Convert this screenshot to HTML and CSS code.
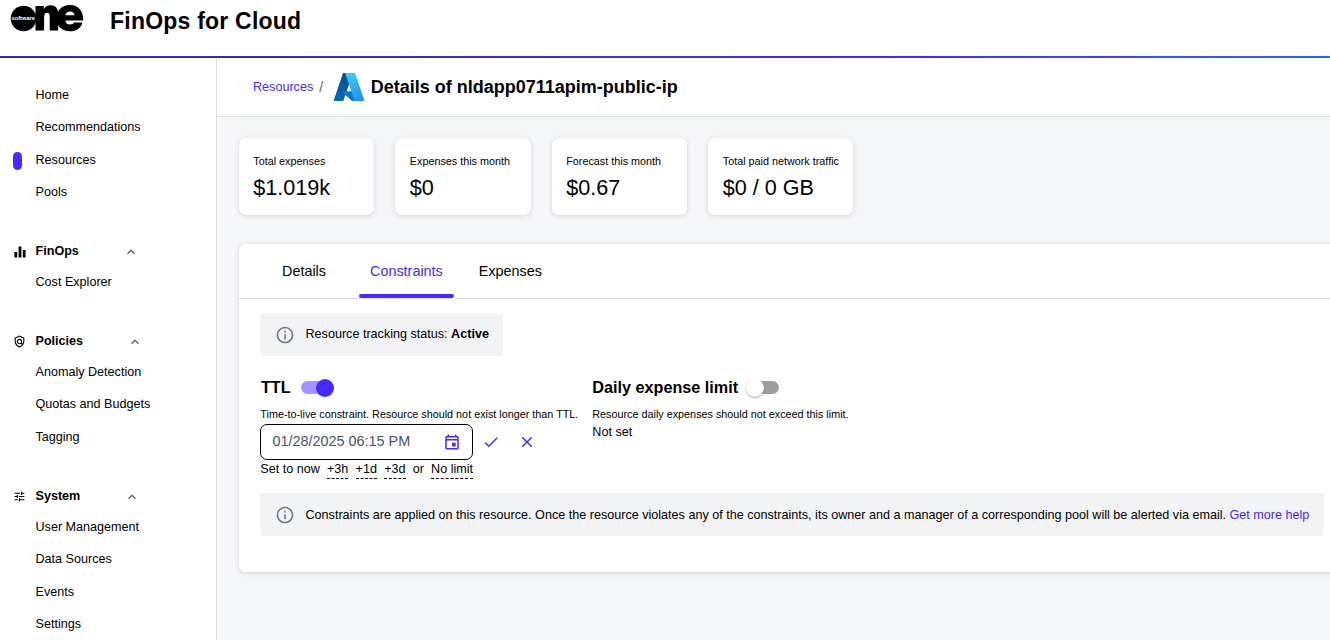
FILE: index.html
```html
<!DOCTYPE html>
<html lang="en">
<head>
<meta charset="utf-8">
<title>FinOps for Cloud</title>
<link rel="stylesheet" href="styles.css">
</head>
<body>
<header class="topbar">
  <svg class="brand" viewBox="0 0 74 28" width="74" height="28">
    <circle cx="13.500" cy="14.500" r="12.800"/>
    <path d="M25.500 2h8.300v3C35.300 2.600 37.300 1.200 40.200 1.200c5.500 0 8 3.300 8 9V26.500h-8.500V12.500c0-2.600-.7-3.700-2.500-3.700-2.100 0-3.100 1.500-3.100 4.200v13.500h-8.600z"/>
    <path fill-rule="evenodd" d="M60 1c8 0 13.300 5.500 13.300 15.500H55.300c.4 2.700 2 4 4.700 4 2.200 0 3.400-.7 4.100-2h8.400C71 24 66.500 27.300 60 27.300c-8 0-13.500-5-13.500-13S52 1 60 1zM55.300 11.300h9.400C64.200 8.800 62.600 7.400 60 7.400s-4.200 1.400-4.700 3.900z"/>
    <text class="brand-word" x="1.500" y="16.200" textLength="23.500" lengthAdjust="spacingAndGlyphs">software</text>
  </svg>
  <h1 class="product">FinOps for Cloud</h1>
</header>
<div class="shell">
  <nav class="sidebar">
    <ul class="nav-list">
      <li>Home</li>
      <li>Recommendations</li>
      <li class="current">Resources</li>
      <li>Pools</li>
    </ul>
    <section class="nav-group">
      <h2 class="nav-title">
        <svg class="nav-icon bars" viewBox="2 2 20 20"><path d="M10 20h4V4h-4v16zm-6 0h4v-8H4v8zM16 9v11h4V9h-4z"/></svg>
        <span class="nav-label finops">FinOps</span>
        <svg class="chevron" viewBox="0 0 24 24"><path d="m12 8-6 6 1.410 1.410L12 10.830l4.590 4.580L18 14z"/></svg>
      </h2>
      <ul class="nav-list"><li>Cost Explorer</li></ul>
    </section>
    <section class="nav-group">
      <h2 class="nav-title">
        <svg class="nav-icon" viewBox="0 0 24 24"><path d="M12 1 3 5v6c0 5.550 3.840 10.740 9 12 5.160-1.260 9-6.450 9-12V5l-9-4zm7 10c0 1.850-.51 3.650-1.380 5.210l-1.450-1.450c1.290-1.940 1.070-4.580-.64-6.290-1.950-1.950-5.120-1.950-7.070 0-1.950 1.950-1.950 5.120 0 7.070 1.710 1.710 4.350 1.920 6.290.64l1.720 1.720c-1.190 1.420-2.730 2.510-4.470 3.040-4.020-1.250-7-5.420-7-9.940V6.300l7-3.110 7 3.110V11zm-7 4c-1.660 0-3-1.340-3-3s1.340-3 3-3 3 1.340 3 3-1.340 3-3 3z"/></svg>
        <span class="nav-label policies">Policies</span>
        <svg class="chevron" viewBox="0 0 24 24"><path d="m12 8-6 6 1.410 1.410L12 10.830l4.590 4.580L18 14z"/></svg>
      </h2>
      <ul class="nav-list">
        <li>Anomaly Detection</li>
        <li>Quotas and Budgets</li>
        <li>Tagging</li>
      </ul>
    </section>
    <section class="nav-group last">
      <h2 class="nav-title">
        <svg class="nav-icon" viewBox="0 0 24 24"><path d="M3 17v2h6v-2H3zM3 5v2h10V5H3zm10 16v-2h8v-2h-8v-2h-2v6h2zM7 9v2H3v2h4v2h2V9H7zm14 4v-2H11v2h10zm-6-4h2V7h4V5h-4V3h-2v6z"/></svg>
        <span class="nav-label system">System</span>
        <svg class="chevron" viewBox="0 0 24 24"><path d="m12 8-6 6 1.410 1.410L12 10.830l4.590 4.580L18 14z"/></svg>
      </h2>
      <ul class="nav-list">
        <li>User Management</li>
        <li>Data Sources</li>
        <li>Events</li>
        <li>Settings</li>
      </ul>
    </section>
  </nav>
  <main class="content">
    <div class="crumbs">
      <a class="link">Resources</a>
      <span class="slash">/</span>
      <svg class="azure" viewBox="4 6.500 88 83" preserveAspectRatio="none">
        <defs>
          <linearGradient id="left" x1=".6" y1="0" x2=".3" y2="1"><stop offset="0" stop-color="#114a8b"/><stop offset="1" stop-color="#0669bc"/></linearGradient>
          <linearGradient id="right" x1=".3" y1="0" x2=".7" y2="1"><stop offset="0" stop-color="#3ccbf4"/><stop offset="1" stop-color="#2892df"/></linearGradient>
        </defs>
        <path fill="url(#left)" d="M30.500 6.544h28.876l-27.030 80.087a4.152 4.152 0 0 1-3.933 2.824H4L4.221 83.980z"/>
        <path fill="#0078d4" d="M71.175 60.261h-41.290a1.911 1.911 0 0 0-1.305 3.309l26.532 24.764a4.171 4.171 0 0 0 2.846 1.121h23.380z"/>
        <path fill="url(#right)" d="M65.500 6.544H33.648a4.146 4.146 0 0 1 3.928 2.820l25.184 74.620a4.146 4.146 0 0 1-3.928 5.472H92V84z"/>
      </svg>
      <h2 class="page-title">Details of nldapp0711apim-public-ip</h2>
    </div>
    <div class="stats">
      <article class="card stat"><p class="stat-name">Total expenses</p><p class="stat-value">$1.019k</p></article>
      <article class="card stat"><p class="stat-name">Expenses this month</p><p class="stat-value">$0</p></article>
      <article class="card stat"><p class="stat-name">Forecast this month</p><p class="stat-value">$0.67</p></article>
      <article class="card stat wide"><p class="stat-name">Total paid network traffic</p><p class="stat-value">$0 / 0 GB</p></article>
    </div>
    <section class="card panel">
      <div class="tabs">
        <span class="tab first">Details</span>
        <span class="tab active">Constraints</span>
        <span class="tab">Expenses</span>
      </div>
      <div class="panel-body">
        <div class="notice status">
          <svg class="info" viewBox="0 0 24 24"><path d="M11 7h2v2h-2zm0 4h2v6h-2zm1-9C6.480 2 2 6.480 2 12s4.480 10 10 10 10-4.480 10-10S17.520 2 12 2zm0 18c-4.410 0-8-3.590-8-8s3.590-8 8-8 8 3.590 8 8-3.590 8-8 8z"/></svg>
          <span class="notice-text">Resource tracking status: <b>Active</b></span>
        </div>
        <div class="limits">
          <div class="limit ttl">
            <h3 class="limit-title">TTL <span class="switch on"><i class="knob"></i></span></h3>
            <p class="hint">Time-to-live constraint. Resource should not exist longer than TTL.</p>
            <div class="editor">
              <div class="field">
                <span class="field-value">01/28/2025 06:15 PM</span>
                <svg class="tool" viewBox="0 0 24 24"><path d="M19 4h-1V2h-2v2H8V2H6v2H5c-1.110 0-1.990.9-1.990 2L3 20c0 1.100.89 2 2 2h14c1.100 0 2-.9 2-2V6c0-1.100-.9-2-2-2zm0 16H5V10h14v10zm0-12H5V6h14v2zm-7 5h5v5h-5z"/></svg>
              </div>
              <svg class="tool" viewBox="0 0 24 24"><path d="M9 16.170 4.830 12l-1.420 1.410L9 19 21 7l-1.410-1.410z"/></svg>
              <svg class="tool" viewBox="0 0 24 24"><path d="M19 6.410 17.590 5 12 10.590 6.410 5 5 6.410 10.590 12 5 17.590 6.410 19 12 13.410 17.590 19 19 17.590 13.410 12z"/></svg>
            </div>
            <div class="presets">
              <span>Set to now</span><span class="preset">+3h</span><span class="preset">+1d</span><span class="preset">+3d</span><span>or</span><span class="preset">No limit</span>
            </div>
          </div>
          <div class="limit daily">
            <h3 class="limit-title">Daily expense limit <span class="switch"><i class="knob"></i></span></h3>
            <p class="hint">Resource daily expenses should not exceed this limit.</p>
            <p class="unset">Not set</p>
          </div>
        </div>
        <div class="notice help">
          <svg class="info" viewBox="0 0 24 24"><path d="M11 7h2v2h-2zm0 4h2v6h-2zm1-9C6.480 2 2 6.480 2 12s4.480 10 10 10 10-4.480 10-10S17.520 2 12 2zm0 18c-4.410 0-8-3.590-8-8s3.590-8 8-8 8 3.590 8 8-3.590 8-8 8z"/></svg>
          <span>Constraints are applied on this resource. Once the resource violates any of the constraints, its owner and a manager of a corresponding pool will be alerted via email. <a class="link">Get more help</a></span>
        </div>
      </div>
    </section>
  </main>
</div>
</body>
</html>
```
FILE: styles.css
```css
* { box-sizing: border-box; }
body, h1, h2, h3, p, ul { margin: 0; padding: 0; }
ul { list-style: none; }
body {
  height: 640px;
  overflow: hidden;
  font: 12.6px/18px "Liberation Sans", Arial, sans-serif;
  color: #000;
  background: #fff;
}
.topbar {
  height: 58px;
  display: flex;
  align-items: flex-start;
  padding: 4px 0 0 10px;
  border-bottom: 2px solid;
  border-image: linear-gradient(90deg, #3f2a9c, #472aff 70%, #2a6ae8) 1;
}
.brand-word { font: bold 6px "Liberation Sans", Arial, sans-serif; fill: #fff; }
.product { margin: 4px 0 0 26px; font-size: 23px; line-height: 26px; letter-spacing: .22px; white-space: nowrap; }
.shell { display: flex; height: 582px; }
.sidebar { flex: none; width: 217px; padding-top: 21.1px; border-right: 1px solid #dcdee0; }
.nav-list li { position: relative; height: 32.4px; padding-left: 35.5px; line-height: 32.4px; }
.nav-list .current::before {
  content: "";
  position: absolute;
  left: 13px;
  top: 8px;
  width: 9px;
  height: 18px;
  border-radius: 5px;
  background: #472aff;
}
.nav-group { margin-top: 27.7px; }
.nav-group.last { margin-top: 28px; }
.nav-title { display: flex; align-items: center; height: 29.8px; padding-left: 13px; font-size: 12.6px; }
.nav-icon { width: 13px; height: 13px; margin-right: 9.5px; margin-top: 1px; }
.nav-icon.bars { width: 14px; height: 14px; margin: 2px 9px 0 -.5px; }
.nav-label { flex: none; }
.nav-label.finops { width: 87px; }
.nav-label.policies { width: 91px; }
.nav-label.system { width: 88px; }
.chevron { width: 16px; height: 16px; margin-top: 1px; fill: #5d6678; }
.content { flex: 1; min-width: 0; background: #f4f6f8; overflow: hidden; }
.crumbs { display: flex; align-items: center; height: 59px; padding-left: 36px; background: #fff; border-bottom: 1px solid #dde1e7; }
.link { color: #472aff; }
.slash { margin: 0 10.5px 0 6px; font-size: 14.4px; color: #5d6678; }
.azure { width: 30px; height: 28px; margin-right: 7px; }
.page-title { font-size: 18px; line-height: 22px; white-space: nowrap; }
.card { background: #fff; border-radius: 7px; box-shadow: 0 1px 5px rgba(30, 40, 60, .16); }
.stats { display: flex; gap: 21.3px; padding: 21px 0 0 22px; }
.stat { width: 135.2px; height: 77px; padding: 14px 0 0 14.3px; white-space: nowrap; }
.stat.wide { width: 145px; }
.stat-name { font-size: 10.8px; line-height: 18px; }
.stat-value { margin-top: 4px; font-size: 21.6px; line-height: 28px; }
.panel { width: 1200px; height: 328px; margin: 29px 0 0 22px; }
.tabs { display: flex; height: 55px; padding-left: 32px; border-bottom: 1px solid #e0e0e2; font-size: 14.4px; line-height: 54px; }
.tab { height: 54px; padding: 0 11px; margin-right: 14px; }
.tab.first { margin-right: 22px; }
.tab.active { position: relative; color: #472aff; }
.tab.active::after {
  content: "";
  position: absolute;
  left: 0;
  right: 0;
  bottom: 0;
  height: 4px;
  border-radius: 2px;
  background: #472aff;
}
.panel-body { padding: 14px 0 0 21px; }
.notice { display: flex; align-items: center; height: 43px; padding: 0 14px 0 15px; border-radius: 4px; background: #f2f3f5; white-space: nowrap; }
.notice.status { width: 243px; }
.notice.help { width: 1064px; }
.notice-text { margin-top: -2px; }
.info { flex: none; width: 20px; height: 20px; margin-right: 10.5px; fill: #727a8d; }
.limits { display: flex; height: 123px; margin-top: 14px; }
.limit.ttl { width: 332px; }
.limit { padding: 7px 0 0 .3px; white-space: nowrap; }
.limit-title { display: flex; align-items: center; height: 20px; font-size: 16.2px; }
.ttl .limit-title { padding-left: .7px; }
.switch { position: relative; width: 31px; height: 13px; margin: 1px 0 0 10px; border-radius: 7px; background: #9e9e9e; }
.knob { position: absolute; left: -2px; top: -2.5px; width: 18px; height: 18px; border-radius: 50%; background: #fff; box-shadow: 0 1px 2px rgba(0, 0, 0, .35); }
.switch.on { background: #a394ff; }
.switch.on .knob { left: 15px; background: #472aff; box-shadow: none; }
.hint { margin-top: 8px; font-size: 10.8px; line-height: 18px; }
.editor { display: flex; align-items: center; gap: 18px; margin: 1px 0 0 -.3px; }
.field { display: flex; align-items: center; width: 213px; height: 36px; margin-right: -9px; padding: 0 11px 0 11.5px; border: 1px solid #000; border-radius: 7px; }
.field-value { flex: 1; margin-top: -2px; font-size: 14.4px; color: #4b5263; }
.tool { width: 18px; height: 18px; fill: #472aff; }
.presets { display: flex; gap: 7.2px; }
.preset { border-bottom: 1px dashed #000; }
.unset { line-height: 18px; }
```
